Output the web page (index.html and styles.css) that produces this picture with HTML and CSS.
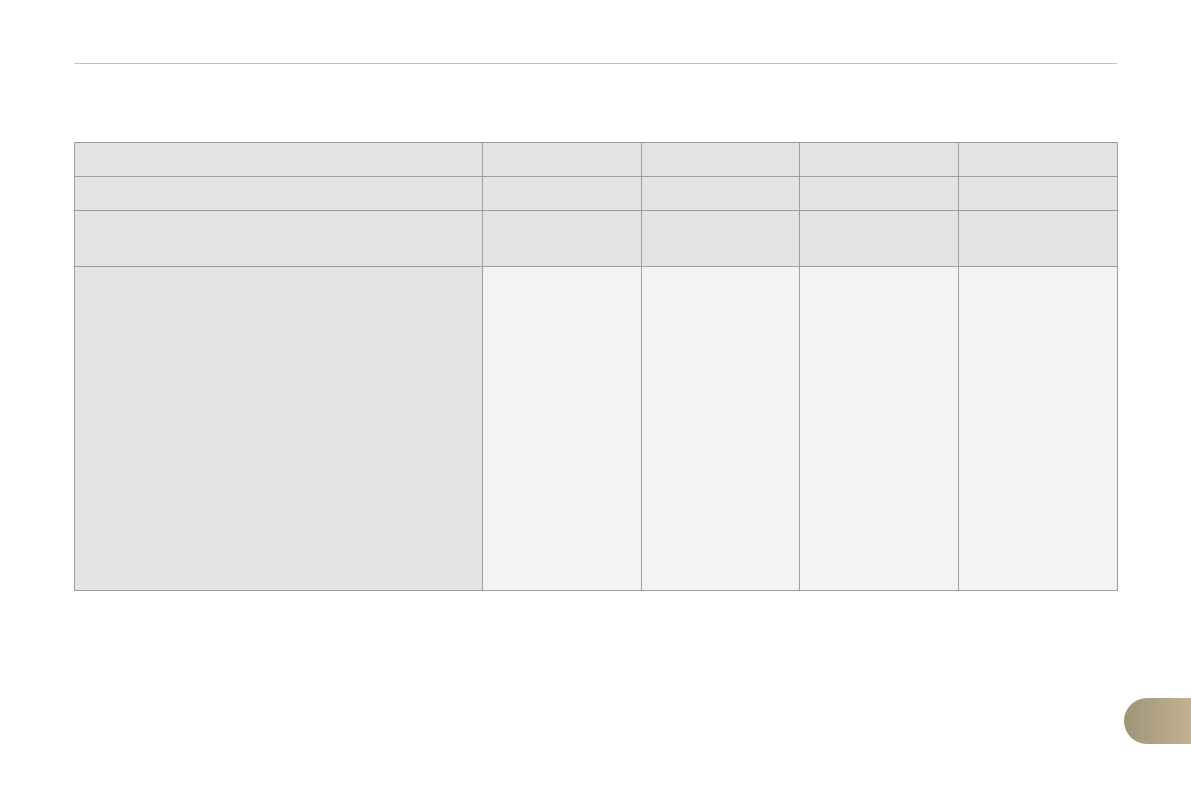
FILE: index.html
```html
<!DOCTYPE html>
<html>
<head>
<meta charset="utf-8">
<link rel="stylesheet" href="styles.css">
</head>
<body>
<div class="page">
  <div class="rule"></div>
  <div class="grid">
    <div class="c h"></div><div class="c h"></div><div class="c h"></div><div class="c h"></div><div class="c h"></div>
    <div class="c h"></div><div class="c h"></div><div class="c h"></div><div class="c h"></div><div class="c h"></div>
    <div class="c h"></div><div class="c h"></div><div class="c h"></div><div class="c h"></div><div class="c h"></div>
    <div class="c h"></div><div class="c b"></div><div class="c b"></div><div class="c b"></div><div class="c b"></div>
  </div>
</div>
<div class="tab"></div>
</body>
</html>
```
FILE: styles.css
```css
html, body { margin: 0; padding: 0; background: #ffffff; font-family: "Liberation Sans", Arial, sans-serif; }
.page { padding: 63px 74px 0 74px; width: 1043px; }
.rule { height: 1px; background: #cdc2b1; width: 1043px; }
.grid {
  margin-top: 78px;
  display: grid;
  grid-template-columns: 407px 158px 157px 158px 158px;
  grid-template-rows: 33px 33px 55px 323px;
  gap: 1px;
  background: #9d9d9d;
  border: 1px solid #9d9d9d;
  width: 1042px;
}
.c.h { background: #e2e3e2; }
.c.b { background: #f3f3f3; }
.tab {
  position: absolute;
  left: 1124px; top: 698px;
  width: 67px; height: 46px;
  border-radius: 23px 0 0 23px;
  background: linear-gradient(to right, #a09379, #c2b292);
}
```
